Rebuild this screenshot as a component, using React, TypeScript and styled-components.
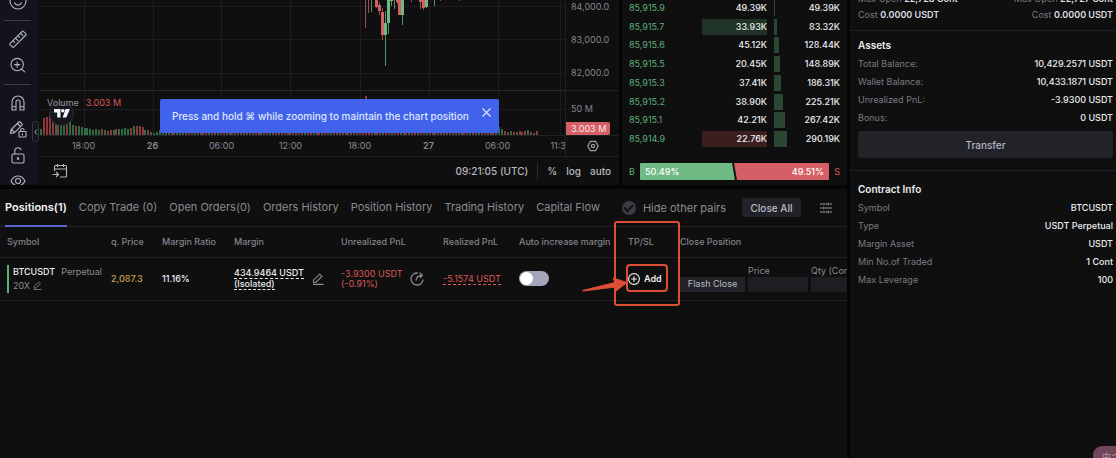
import React from "react";
import styled, { createGlobalStyle, css } from "styled-components";

const c = {
  page: "#050506",
  panel: "#0f0f10",
  line: "#202124",
  grid: "#1d1d20",
  muted: "#7a7b83",
  soft: "#8a8b93",
  text: "#ececee",
  green: "#5cae76",
  greenFill: "#6fb985",
  red: "#dc5857",
  redFill: "#d55f66",
  mark: "#dd4e34",
  control: "#222329",
};

const GlobalStyle = createGlobalStyle`
  * { box-sizing: border-box; }
  body {
    margin: 0;
    background: ${c.page};
    color: ${c.text};
    font-family: Inter, "Liberation Sans", "Noto Sans CJK SC", sans-serif;
    font-size: 9px;
    line-height: 12px;
    overflow: hidden;
  }
  button, input { font: inherit; color: inherit; border: 0; margin: 0; padding: 0; background: none; }
  svg { display: block; flex: none; }
  h2, dl, dd, p { margin: 0; }
`;

const Page = styled.div`
  display: grid;
  grid-template-columns: minmax(0, 1fr) 266px;
  gap: 3px;
  min-height: 100vh;
`;

const Workspace = styled.main`
  display: flex;
  flex-direction: column;
  gap: 4px;
  min-width: 0;
`;

const Market = styled.div`
  display: grid;
  grid-template-columns: minmax(0, 1fr) 225px;
  gap: 3px;
  height: 185px;
`;

/* ---------- chart ---------- */

const ChartPanel = styled.section`
  display: grid;
  grid-template-columns: 37px minmax(0, 1fr);
  gap: 3px;
  position: relative;
  min-height: 0;
  background: ${c.panel};
`;

const Toolbar = styled.div`
  display: flex;
  flex-direction: column;
  align-items: center;
  min-height: 0;
  overflow: hidden;
  padding-right: 2px;
  background: #12131e;
  color: #b4b6c0;
`;

const ToolButton = styled.button<{ $cut?: boolean }>`
  display: flex;
  flex: none;
  align-items: center;
  justify-content: center;
  width: 30px;
  height: 26px;
  margin-top: ${(p) => (p.$cut ? "-12px" : 0)};
`;

const ToolDivider = styled.div`
  flex: none;
  width: 27px;
  height: 1px;
  margin: 6px 0 5px;
  background: #3b3d48;
`;

const CollapseButton = styled.button`
  position: absolute;
  left: 32px;
  top: 121px;
  width: 7px;
  height: 21px;
  border: 1px solid #34353d;
  border-radius: 3px;
  background: #15161c;
  color: #a0a2aa;
  display: flex;
  align-items: center;
  justify-content: center;
`;

const ChartBody = styled.div`
  display: flex;
  flex-direction: column;
  min-width: 0;
`;

const ChartRow = styled.div<{ $height: number }>`
  display: grid;
  grid-template-columns: minmax(0, 1fr) 54px;
  height: ${(p) => p.$height}px;
  border-bottom: 1px solid ${c.line};
`;

const Plot = styled.div`
  position: relative;
  min-width: 0;
  overflow: hidden;
`;

const VolumeLegend = styled.div`
  position: absolute;
  left: 7px;
  top: 97px;
  display: flex;
  gap: 7px;
  color: #92939b;
  strong { font-weight: 400; color: ${c.red}; }
`;

const ChartLogo = styled.div`
  position: absolute;
  left: 9px;
  top: 101px;
  display: flex;
  align-items: center;
  justify-content: center;
  width: 25px;
  height: 25px;
  border: 1px solid #2a2c36;
  border-radius: 50%;
  background: #15161f;
`;

const PriceAxis = styled.div`
  display: flex;
  flex-direction: column;
  overflow: hidden;
  border-left: 1px solid ${c.line};
  color: #85868e;
`;

const PriceTick = styled.span<{ $first?: boolean }>`
  display: flex;
  align-items: center;
  flex: none;
  height: 33px;
  margin-top: ${(p) => (p.$first ? "-10px" : 0)};
  padding-left: 5px;
`;

const VolumeAxis = styled.div`
  display: flex;
  flex-direction: column;
  justify-content: space-between;
  flex: 1;
  margin-top: 1px;
  padding-top: 12px;
  border-top: 1px solid ${c.line};
  span { padding-left: 5px; }
`;

const VolumeTag = styled.div`
  width: 44px;
  padding-left: 5px;
  border-radius: 0 2px 2px 0;
  background: ${c.redFill};
  color: #fbe9ea;
  line-height: 13px;
  white-space: nowrap;
`;

const TimeAxis = styled.div`
  display: flex;
  align-items: center;
  overflow: hidden;
  padding-left: 9px;
  color: #8a8b93;
`;

const TimeTick = styled.span<{ $day?: boolean }>`
  flex: none;
  width: 69px;
  text-align: center;
  font-weight: ${(p) => (p.$day ? 600 : 400)};
  &:last-child { width: 58px; }
`;

const AxisCorner = styled.div`
  display: flex;
  align-items: center;
  justify-content: center;
  border-left: 1px solid ${c.line};
  color: #a0a2aa;
`;

const ChartFooter = styled.div`
  display: flex;
  flex: 1;
  align-items: center;
  gap: 9px;
  padding: 0 8px 0 12px;
  font-size: 10px;
  font-weight: 500;
  color: #b6b7bd;
`;

const FooterButton = styled.button<{ $push?: boolean }>`
  margin-left: ${(p) => (p.$push ? "auto" : 0)};
`;

const FooterRule = styled.span`
  width: 1px;
  height: 16px;
  background: #2f3035;
`;

const Toast = styled.div`
  position: absolute;
  left: 160px;
  top: 99px;
  display: flex;
  width: 339px;
  height: 34px;
  padding: 6px 8px 0 12px;
  justify-content: space-between;
  border-radius: 2px;
  background: #4163ec;
  color: #dfe5fd;
  font-size: 10px;
  font-weight: 500;
  white-space: nowrap;
  p { line-height: 22px; }
`;

const ToastClose = styled.button`
  height: 14px;
`;

/* ---------- order book ---------- */

const Book = styled.section`
  display: flex;
  flex-direction: column;
  padding: 0 7px 5px;
  background: ${c.panel};
`;

const BookRows = styled.div`
  display: flex;
  flex: 1;
  flex-direction: column;
  justify-content: space-between;
  margin-bottom: 16px;
`;

const BookRow = styled.div`
  display: grid;
  grid-template-columns: 1fr 65px 66px;
  gap: 7px;
  line-height: 16px;
  text-align: right;
  font-weight: 500;
`;

const BookPrice = styled.span`
  color: ${c.green};
  font-weight: 400;
  text-align: left;
`;

const BookSize = styled.span<{ $flash?: "up" | "down" }>`
  background: ${(p) => (p.$flash === "up" ? "#1f3427" : p.$flash === "down" ? "#3a1e20" : "none")};
`;

const BookTotal = styled.span`
  display: flex;
  justify-content: space-between;
`;

const Depth = styled.i`
  height: 16px;
  background: #2a4733;
`;

const Ratio = styled.div`
  display: grid;
  grid-template-columns: 9px 1fr 9px;
  align-items: center;
  gap: 2px;
  line-height: 17px;
`;

const RatioSide = styled.span<{ $sell?: boolean }>`
  color: ${(p) => (p.$sell ? c.red : c.green)};
  text-align: ${(p) => (p.$sell ? "right" : "left")};
`;

const RatioBar = styled.div`
  display: flex;
  font-weight: 500;
  color: #fff;
`;

const RatioPart = styled.span<{ $sell?: boolean }>`
  flex: 1;
  padding: 0 5px;
  border-radius: 1px;
  ${(p) =>
    p.$sell
      ? css`
          margin-left: -1px;
          text-align: right;
          background: ${c.redFill};
          clip-path: polygon(0 0, 100% 0, 100% 100%, 3px 100%);
        `
      : css`
          background: ${c.greenFill};
          clip-path: polygon(0 0, calc(100% - 3px) 0, 100% 100%, 0 100%);
        `}
`;

/* ---------- positions ---------- */

const Positions = styled.section`
  flex: 1;
  overflow: hidden;
  background: ${c.panel};
`;

const TabBar = styled.div`
  display: flex;
  align-items: center;
  height: 38px;
  padding-left: 5px;
  border-bottom: 1px solid ${c.line};
  font-size: 11px;
  white-space: nowrap;
  color: ${c.soft};
`;

const Tabs = styled.nav`
  display: flex;
  align-self: stretch;
  gap: 12px;
  margin-bottom: -1px;
`;

const Tab = styled.button<{ $active?: boolean }>`
  font-weight: ${(p) => (p.$active ? 600 : 400)};
  color: ${(p) => (p.$active ? "#f4f4f6" : c.soft)};
  border-bottom: 2px solid ${(p) => (p.$active ? "#5866c9" : "transparent")};
`;

const HidePairs = styled.label`
  display: flex;
  align-items: center;
  gap: 7px;
  margin-left: 22px;
`;

const RoundCheck = styled.input`
  appearance: none;
  width: 14px;
  height: 14px;
  border-radius: 50%;
  background: #3c3d42;
  display: grid;
  place-items: center;
  &::after {
    content: "";
    width: 7px;
    height: 4px;
    margin-top: -2px;
    border: solid #0f0f10;
    border-width: 0 0 2px 2px;
    transform: rotate(-45deg);
  }
`;

const CloseAll = styled.button`
  flex: none;
  width: 59px;
  height: 19px;
  margin: 0 19px 0 16px;
  border-radius: 2px;
  background: ${c.control};
  color: #b9bbc7;
  font-size: 10px;
  font-weight: 500;
`;

const Table = styled.table`
  width: 100%;
  table-layout: fixed;
  border-collapse: collapse;
  white-space: nowrap;
  th, td {
    padding: 0;
    text-align: left;
    font-weight: 500;
    border-bottom: 1px solid ${c.line};
  }
  th { height: 30px; color: #82838b; }
  td { height: 43px; }
  th:first-child, td:first-child { padding-left: 7px; }
`;

const MarkedHeader = styled.th`
  position: relative;
`;

const Annotation = styled.svg`
  position: absolute;
  left: -47px;
  top: -7px;
  z-index: 1;
  pointer-events: none;
`;

const Symbol = styled.div`
  padding-left: 4px;
  border-left: 2px solid ${c.green};
  line-height: 14px;
`;

const Line = styled.div<{ $gap?: number }>`
  display: flex;
  align-items: center;
  gap: ${(p) => p.$gap ?? 4}px;
`;

const Muted = styled.span`
  font-weight: 400;
  color: ${c.soft};
`;

const Warn = styled.span`
  color: #cda349;
`;

const Dashed = styled.span`
  display: inline-block;
  border-bottom: 1px dashed currentColor;
  line-height: 10px;
`;

const Stack = styled.div`
  display: flex;
  flex-direction: column;
  align-items: flex-start;
  line-height: 10px;
`;

const Loss = styled.div`
  font-weight: 400;
  color: ${c.red};
`;

const Switch = styled.input`
  appearance: none;
  display: block;
  width: 30px;
  height: 15px;
  border-radius: 8px;
  background: #a5a6ba;
  &::before {
    content: "";
    display: block;
    width: 13px;
    height: 13px;
    margin: 1px;
    border-radius: 50%;
    background: #fff;
  }
`;

const AddButton = styled.button`
  display: flex;
  align-items: center;
  gap: 4px;
  font-weight: 600;
`;

const CloseForm = styled.div`
  display: flex;
  align-items: flex-end;
  gap: 3px;
  overflow: hidden;
  padding-bottom: 1px;
`;

const FlashClose = styled.button`
  flex: none;
  width: 65px;
  height: 15px;
  background: ${c.control};
  color: #b9bac2;
  font-weight: 400;
`;

const Field = styled.label`
  flex: none;
  width: 60px;
  color: ${c.soft};
  font-weight: 400;
  input {
    display: block;
    width: 100%;
    height: 15px;
    background: #1d1e22;
  }
`;

/* ---------- account sidebar ---------- */

const Sidebar = styled.aside`
  overflow: hidden;
  background: ${c.panel};
`;

const Limits = styled.section`
  margin-top: -9px;
  padding: 0 3px 7px 8px;
  border-bottom: 1px solid ${c.line};
`;

const LimitRow = styled.div`
  display: flex;
  justify-content: space-between;
  line-height: 16px;
`;

const Block = styled.section`
  padding: 5px 3px 12px 8px;
  & + & { border-top: 1px solid ${c.line}; padding-top: 9px; }
`;

const BlockTitle = styled.h2`
  font-size: 10px;
  font-weight: 600;
  line-height: 18px;
  margin-bottom: 1px;
`;

const Pair = styled.div`
  display: flex;
  justify-content: space-between;
  line-height: 18px;
  dt { color: ${c.muted}; }
  dd { font-weight: 500; }
`;

const Quote = styled.span`
  color: ${c.muted};
  strong { font-weight: 600; color: #dedee1; }
`;

const Transfer = styled.button`
  width: 100%;
  height: 27px;
  margin-top: 4px;
  border-radius: 3px;
  background: ${c.control};
  color: #b3b5c2;
  font-size: 10px;
  font-weight: 500;
`;

const InputBadge = styled.div`
  position: fixed;
  right: 0;
  bottom: 0;
  width: 23px;
  height: 12px;
  padding: 5px 0 0 9px;
  overflow: hidden;
  border-radius: 9px 0 0 0;
  background: #70475a;
  color: #b594a4;
  white-space: nowrap;
`;

/* ---------- data ---------- */

const verticals = [44, 113, 181, 250, 320, 389, 458, 520];
const horizontals = [6, 39, 73, 109];

/* x, wick top, wick bottom, body top, body bottom, rising */
const candles: [number, number, number, number, number, boolean][] = [
  [325, 0, 28, 0, 0, false],
  [328, 0, 13, 0, 0, false],
  [331, 0, 12, 0, 0, true],
  [336, 0, 8, 0, 7, false],
  [339, 2, 15, 5, 11, false],
  [342, 8, 40, 12, 35, false],
  [345, 11, 66, 23, 35, true],
  [348, 0, 34, 0, 23, true],
  [351, 0, 6, 0, 1, true],
  [354, 0, 9, 0, 0, true],
  [357, 0, 4, 0, 2, false],
  [359, 0, 15, 0, 15, false],
  [362, 0, 25, 0, 15, true],
  [371, 0, 2, 0, 0, false],
  [380, 0, 9, 0, 2, false],
  [383, 0, 10, 0, 8, false],
  [386, 0, 8, 0, 7, true],
  [394, 0, 6, 0, 0, true],
  [400, 0, 1, 0, 0, false],
  [419, 0, 1, 0, 0, false],
];

const volumeStart = [
  6, -17, -18, -23, -20, 15, -16, 14, 12, -11, 13, 10, -9, 9, 8, 7, 7, 6, 5, 6, 5, -6, 5, -4, -5, 5,
  -6, 6, 6, 7, 6, -7, 9, -9, -9, -8, 5, -5, 3, 2, 3, 5, 10, 3, -3, 4, -2, 6, 3, -2, 2, -3, -4, 3, -3,
];
const volumeMiddle = Array.from({ length: 102 }, (_, i) => (i === 57 ? -39 : i % 3 ? -2 : 2));
const volumeEnd = [3, 8, 6, -4, -3, 4, -3, 3, -4, -3, -4, 5, -3, 2, -4];
const volume = [...volumeStart, ...volumeMiddle, ...volumeEnd];

const times: [string, boolean?][] = [
  ["18:00"], ["26", true], ["06:00"], ["12:00"], ["18:00"], ["27", true], ["06:00"], ["11:30"],
];

const book: { price: string; size: string; total: string; depth: number; flash?: "up" | "down" }[] = [
  { price: "85,915.9", size: "49.39K", total: "49.39K", depth: 1 },
  { price: "85,915.7", size: "33.93K", total: "83.32K", depth: 3, flash: "up" },
  { price: "85,915.6", size: "45.12K", total: "128.44K", depth: 5 },
  { price: "85,915.5", size: "20.45K", total: "148.89K", depth: 6 },
  { price: "85,915.3", size: "37.41K", total: "186.31K", depth: 7 },
  { price: "85,915.2", size: "38.90K", total: "225.21K", depth: 9 },
  { price: "85,915.1", size: "42.21K", total: "267.42K", depth: 11 },
  { price: "85,914.9", size: "22.76K", total: "290.19K", depth: 13, flash: "down" },
];

const tabs = [
  "Positions(1)", "Copy Trade (0)", "Open Orders(0)", "Orders History",
  "Position History", "Trading History", "Capital Flow",
];

const assets = [
  ["Total Balance:", "10,429.2571 USDT"],
  ["Wallet Balance:", "10,433.1871 USDT"],
  ["Unrealized PnL:", "-3.9300 USDT"],
  ["Bonus:", "0 USDT"],
];

const contract = [
  ["Symbol", "BTCUSDT"],
  ["Type", "USDT Perpetual"],
  ["Margin Asset", "USDT"],
  ["Min No.of Traded", "1 Cont"],
  ["Max Leverage", "100"],
];

/* ---------- icons ---------- */

const Icon = ({ size = 18, children }: { size?: number; children: React.ReactNode }) => (
  <svg width={size} height={size} viewBox="0 0 18 18" fill="none" stroke="currentColor" strokeWidth="1.1" strokeLinecap="round" strokeLinejoin="round" aria-hidden="true">
    {children}
  </svg>
);

const SmileIcon = () => (
  <Icon>
    <circle cx="9" cy="9" r="8" />
    <path d="M5.5 10.8c.8 1.6 2 2.3 3.500 2.300s2.700-.7 3.500-2.300M6.800 7v.5M11.200 7v.5" />
  </Icon>
);
const RulerIcon = () => (
  <Icon>
    <path d="M1 13.600 13.200 1.300a.8.8 0 0 1 1.100 0l2.600 2.600a.8.8 0 0 1 0 1.100L4.700 17.200a.8.8 0 0 1-1.100 0L1 14.700a.8.8 0 0 1 0-1.100Z" />
    <path d="m4 10.700 1.600 1.600M6.500 8.200l2.300 2.300M9 5.700l1.600 1.600M11.500 3.200l2.300 2.300" />
  </Icon>
);
const ZoomIcon = () => (
  <Icon>
    <circle cx="8.200" cy="8.600" r="6.200" />
    <path d="m12.800 13.200 2.900 2.600M8.200 6v5.200M5.600 8.600h5.200" />
  </Icon>
);
const MagnetIcon = () => (
  <Icon>
    <path d="M3 16V8a6 6 0 0 1 12 0v8h-4V8a2 2 0 0 0-4 0v8H3ZM3 12.800h4M11 12.800h4" />
  </Icon>
);
const PencilLockIcon = () => (
  <Icon>
    <path d="m1.500 12.500.8-3L9.800 2a1 1 0 0 1 1.400 0L13 3.800a1 1 0 0 1 0 1.400l-7.500 7.500-4 .8v-1ZM8.500 3.500l3 3M2.500 9.500l3 3" />
    <rect x="10" y="11.500" width="7" height="5.500" rx=".8" fill="#12131e" />
    <path d="M11.500 11.500v-1.300a1.800 1.800 0 0 1 3.500-.5M13.500 13.700v1.200" />
  </Icon>
);
const UnlockIcon = () => (
  <Icon>
    <rect x="3" y="8" width="12" height="9" rx="1.500" />
    <path d="M5.800 8V4.800a3.200 3.200 0 0 1 6.200-1M9 11.500v2" />
    <circle cx="9" cy="12.500" r=".6" fill="currentColor" />
  </Icon>
);
const EyeIcon = () => (
  <Icon>
    <path d="M2 9s2.600-5 7-5 7 5 7 5-2.600 5-7 5-7-5-7-5Z" />
    <circle cx="9" cy="9" r="2.500" />
  </Icon>
);
const CalendarIcon = () => (
  <svg width="16" height="16" viewBox="0 0 16 16" fill="none" stroke="currentColor" strokeWidth="1.100" aria-hidden="true">
    <path d="M2.500 8V3.500a1 1 0 0 1 1-1h10a1 1 0 0 1 1 1V13a1 1 0 0 1-1 1H8M2.500 6h12M5.500 1v3M11.500 1v3M.5 11.500h5.500M4 9l2.500 2.500L4 14" />
  </svg>
);
const NutIcon = () => (
  <svg width="12" height="12" viewBox="0 0 12 12" fill="none" stroke="currentColor" strokeWidth="1.200" aria-hidden="true">
    <path d="M3.500 1.300h5L11.200 6l-2.700 4.700h-5L.8 6Z" />
    <circle cx="6" cy="6" r="1.600" />
  </svg>
);
const EditIcon = ({ size }: { size: number }) => (
  <svg width={size} height={size} viewBox="0 0 12 12" fill="none" stroke="#8a8b93" strokeWidth="1.100" aria-hidden="true">
    <path d="M1.500 9.500V7.200L7.700 1.200l2.200 2.200-6.200 6.100ZM1 11.400h10.500" />
  </svg>
);
const ShareIcon = () => (
  <svg width="14" height="14" viewBox="0 0 14 14" fill="none" stroke="#8a8b93" strokeWidth="1.300" aria-hidden="true">
    <path d="M8 1.100A6 6 0 1 0 13 7.500M6 8.500C6.200 5.500 8 3.500 12 3.300M9.500.8l2.800 2.500-2.500 2.600" />
  </svg>
);
const PlusCircleIcon = () => (
  <svg width="12" height="12" viewBox="0 0 12 12" fill="none" stroke="#f4f4f6" strokeWidth="1.100" aria-hidden="true">
    <circle cx="6" cy="6" r="5.400" />
    <path d="M6 3.200v5.600M3.200 6h5.600" />
  </svg>
);
const SlidersIcon = () => (
  <svg width="12" height="12" viewBox="0 0 12 12" fill="none" stroke="#9a9ba3" strokeWidth="1.100" aria-hidden="true">
    <path d="M0 2h7M9.500 2H12M8.200.5v3M0 6h2.500M5 6h7M3.800 4.500v3M0 10h7M9.500 10H12M8.200 8.500v3" />
  </svg>
);

/* ---------- sections ---------- */

const Chart = () => (
  <ChartPanel>
    <Toolbar>
      <ToolButton $cut aria-label="Icons"><SmileIcon /></ToolButton>
      <ToolDivider />
      <ToolButton aria-label="Measure"><RulerIcon /></ToolButton>
      <ToolButton aria-label="Zoom in"><ZoomIcon /></ToolButton>
      <ToolDivider />
      <ToolButton aria-label="Magnet mode"><MagnetIcon /></ToolButton>
      <ToolButton aria-label="Stay in drawing mode"><PencilLockIcon /></ToolButton>
      <ToolButton aria-label="Lock drawings"><UnlockIcon /></ToolButton>
      <ToolButton aria-label="Hide drawings"><EyeIcon /></ToolButton>
    </Toolbar>
    <ChartBody>
      <ChartRow $height={136}>
        <Plot>
          <svg width="100%" height="135" shapeRendering="crispEdges" aria-hidden="true">
            {verticals.map((x) => <rect key={x} x={x} y="0" width="1" height="135" fill={c.grid} />)}
            {horizontals.map((y) => <rect key={y} x="0" y={y} width="100%" height="1" fill={c.grid} />)}
            <rect x="0" y="90" width="100%" height="1" fill="#2a2b2f" />
            {candles.map(([x, wt, wb, bt, bb, up]) => (
              <g key={x} fill={up ? c.greenFill : c.redFill}>
                <rect x={x} y={wt} width="1" height={wb - wt} opacity=".75" />
                <rect x={x - 1} y={bt} width="3" height={bb - bt} />
              </g>
            ))}
            {volume.map((v, i) => (
              <rect key={i} x={Math.round(i * 2.9)} y={135 - Math.abs(v)} width="2" height={Math.abs(v)} fill={v < 0 ? "#8a393d" : "#2f6b45"} />
            ))}
          </svg>
          <ChartLogo>
            <svg width="16" height="9" viewBox="0 0 16 9" fill="#f4f4f6" aria-hidden="true">
              <path d="M0 0h6.500v8.500H3.200V3.600H0ZM11.500 0H16l-3.700 8.500H8.700Z" />
              <circle cx="8.800" cy="1.800" r="1.700" />
            </svg>
          </ChartLogo>
          <VolumeLegend><span>Volume</span><strong>3.003 M</strong></VolumeLegend>
        </Plot>
        <PriceAxis>
          <PriceTick $first>84,000.0</PriceTick>
          <PriceTick>83,000.0</PriceTick>
          <PriceTick>82,000.0</PriceTick>
          <VolumeAxis>
            <span>50 M</span>
            <VolumeTag>3.003 M</VolumeTag>
          </VolumeAxis>
        </PriceAxis>
      </ChartRow>
      <ChartRow $height={21}>
        <TimeAxis>
          {times.map(([label, day], i) => <TimeTick key={i} $day={day}>{label}</TimeTick>)}
        </TimeAxis>
        <AxisCorner><NutIcon /></AxisCorner>
      </ChartRow>
      <ChartFooter>
        <FooterButton aria-label="Go to date"><CalendarIcon /></FooterButton>
        <FooterButton $push>09:21:05 (UTC)</FooterButton>
        <FooterRule />
        <FooterButton>%</FooterButton>
        <FooterButton>log</FooterButton>
        <FooterButton>auto</FooterButton>
      </ChartFooter>
    </ChartBody>
    <CollapseButton aria-label="Collapse toolbar">
      <svg width="4" height="6" viewBox="0 0 4 6" fill="none" stroke="currentColor"><path d="M3 .5.800 3 3 5.500" /></svg>
    </CollapseButton>
    <Toast role="status">
      <p>Press and hold ⌘ while zooming to maintain the chart position</p>
      <ToastClose aria-label="Dismiss">
        <svg width="9" height="9" viewBox="0 0 9 9" stroke="currentColor" strokeWidth="1.100"><path d="m.5.5 8 8M8.500.5l-8 8" /></svg>
      </ToastClose>
    </Toast>
  </ChartPanel>
);

const OrderBook = () => (
  <Book>
    <BookRows>
      {book.map((row) => (
        <BookRow key={row.price}>
          <BookPrice>{row.price}</BookPrice>
          <BookSize $flash={row.flash}>{row.size}</BookSize>
          <BookTotal><Depth style={{ width: row.depth }} />{row.total}</BookTotal>
        </BookRow>
      ))}
    </BookRows>
    <Ratio>
      <RatioSide>B</RatioSide>
      <RatioBar>
        <RatioPart>50.49%</RatioPart>
        <RatioPart $sell>49.51%</RatioPart>
      </RatioBar>
      <RatioSide $sell>S</RatioSide>
    </Ratio>
  </Book>
);

const PositionTable = () => (
  <Table>
    <colgroup>
      {[111, 51, 72, 107, 102, 76, 109, 52].map((w, i) => <col key={i} width={w} />)}
      <col />
    </colgroup>
    <thead>
      <tr>
        <th>Symbol</th>
        <th>q. Price</th>
        <th>Margin Ratio</th>
        <th>Margin</th>
        <th>Unrealized PnL</th>
        <th>Realized PnL</th>
        <th id="auto-margin">Auto increase margin</th>
        <MarkedHeader>
          TP/SL
          <Annotation width="102" height="88" fill="none" stroke={c.mark} strokeWidth="2" aria-hidden="true">
            <rect x="34" y="2" width="64" height="83" rx="2" />
            <rect x="46" y="45" width="40" height="26" rx="3" />
            <path d="M1.500 70.500 34 62.500 32 58 46 62.500 35 71 34.500 67 2 71Z" fill={c.mark} strokeWidth="1" strokeLinejoin="round" />
          </Annotation>
        </MarkedHeader>
        <th>Close Position</th>
      </tr>
    </thead>
    <tbody>
      <tr>
        <td>
          <Symbol>
            <Line $gap={6}>BTCUSDT <Muted>Perpetual</Muted></Line>
            <Line $gap={3}><Muted>20X</Muted><EditIcon size={9} /></Line>
          </Symbol>
        </td>
        <td><Warn>2,087.3</Warn></td>
        <td>11.16%</td>
        <td>
          <Line $gap={8}>
            <Stack><Dashed>434.9464 USDT</Dashed><Dashed>(Isolated)</Dashed></Stack>
            <EditIcon size={12} />
          </Line>
        </td>
        <td>
          <Line $gap={8}>
            <Loss><Stack><span>-3.9300 USDT</span><span>(-0.91%)</span></Stack></Loss>
            <ShareIcon />
          </Line>
        </td>
        <td><Loss><Dashed>-5.1574 USDT</Dashed></Loss></td>
        <td><Switch type="checkbox" role="switch" aria-labelledby="auto-margin" /></td>
        <td><AddButton><PlusCircleIcon />Add</AddButton></td>
        <td>
          <CloseForm>
            <FlashClose>Flash Close</FlashClose>
            <Field>Price<input type="text" /></Field>
            <Field>Qty (Cont)<input type="text" /></Field>
          </CloseForm>
        </td>
      </tr>
    </tbody>
  </Table>
);

export default function App() {
  return (
    <>
      <GlobalStyle />
      <Page>
        <Workspace>
          <Market>
            <Chart />
            <OrderBook />
          </Market>
          <Positions>
            <TabBar>
              <Tabs>
                {tabs.map((name, i) => <Tab key={name} $active={i === 0}>{name}</Tab>)}
              </Tabs>
              <HidePairs><RoundCheck type="checkbox" />Hide other pairs</HidePairs>
              <CloseAll>Close All</CloseAll>
              <button aria-label="Table settings"><SlidersIcon /></button>
            </TabBar>
            <PositionTable />
          </Positions>
        </Workspace>
        <Sidebar>
          <Limits>
            <LimitRow><Quote>Max Open <strong>22,728 Cont</strong></Quote><Quote>Max Open <strong>22,727 Cont</strong></Quote></LimitRow>
            <LimitRow><Quote>Cost <strong>0.0000 USDT</strong></Quote><Quote>Cost <strong>0.0000 USDT</strong></Quote></LimitRow>
          </Limits>
          <Block>
            <BlockTitle>Assets</BlockTitle>
            <dl>{assets.map(([k, v]) => <Pair key={k}><dt>{k}</dt><dd>{v}</dd></Pair>)}</dl>
            <Transfer>Transfer</Transfer>
          </Block>
          <Block>
            <BlockTitle>Contract Info</BlockTitle>
            <dl>{contract.map(([k, v]) => <Pair key={k}><dt>{k}</dt><dd>{v}</dd></Pair>)}</dl>
          </Block>
        </Sidebar>
      </Page>
      <InputBadge>中つ</InputBadge>
    </>
  );
}
